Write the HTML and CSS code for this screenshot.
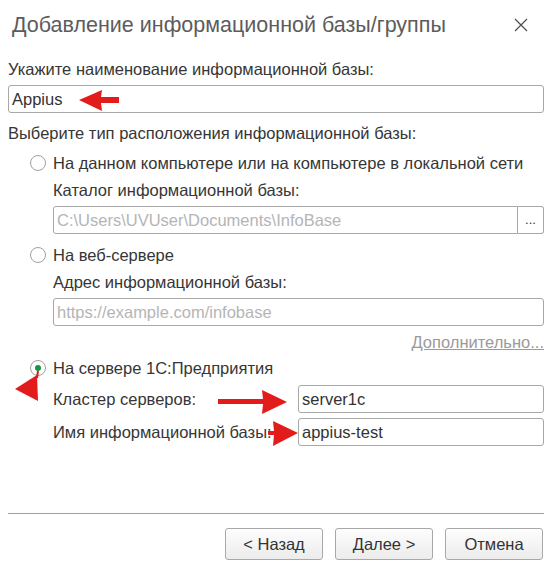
FILE: index.html
```html
<!DOCTYPE html>
<html lang="ru">
<head>
    <meta charset="UTF-8">
    <title>Добавление информационной базы/группы</title>
    <link rel="stylesheet" href="styles.css">
</head>
<body>
    <div class="dialog">
        <!-- Title -->
        <div class="title-bar">
            <h1>Добавление информационной базы/группы</h1>
            <svg class="close" width="16" height="16" viewBox="0 0 16 16">
                <path d="M2 2 L14 14 M14 2 L2 14" stroke="#505050" stroke-width="1.3" fill="none"/>
            </svg>
        </div>

        <div class="label first">Укажите наименование информационной базы:</div>
        <div class="field">Appius</div>

        <div class="label section">Выберите тип расположения информационной базы:</div>

        <div class="option">
            <div class="radio-row">
                <span class="radio"></span>
                <span>На данном компьютере или на компьютере в локальной сети</span>
            </div>
            <div class="sub">
                <div class="label sub-label">Каталог информационной базы:</div>
                <div class="field-group">
                    <div class="field placeholder">C:\Users\UVUser\Documents\InfoBase</div>
                    <div class="pick">...</div>
                </div>
            </div>
        </div>

        <div class="option">
            <div class="radio-row">
                <span class="radio"></span>
                <span>На веб-сервере</span>
            </div>
            <div class="sub">
                <div class="label sub-label">Адрес информационной базы:</div>
                <div class="field placeholder">https://example.com/infobase</div>
                <div class="more"><a href="#">Дополнительно...</a></div>
            </div>
        </div>

        <div class="option last">
            <div class="radio-row">
                <span class="radio checked"></span>
                <span>На сервере 1С:Предприятия</span>
            </div>
            <div class="sub">
                <div class="pair">
                    <div class="pair-label">Кластер серверов:</div>
                    <div class="field">server1c</div>
                </div>
                <div class="pair second">
                    <div class="pair-label">Имя информационной базы:</div>
                    <div class="field">appius-test</div>
                </div>
            </div>
        </div>

        <div class="separator"></div>

        <div class="buttons">
            <button>&lt; Назад</button>
            <button>Далее &gt;</button>
            <button>Отмена</button>
        </div>
    </div>

    <!-- Red annotation arrows -->
    <svg class="marks" width="552" height="571" viewBox="0 0 552 571">
        <g fill="#e21b1b">
            <polygon points="79,100 102,90 101,97 119,97 119,103 101,103 102,111"/>
            <polygon points="218,399 263,399 262,390 287,402 262,414 263,404 218,404"/>
            <polygon points="268,431 274,431 273,421 298,433 273,446 274,435 268,435"/>
            <polygon points="15,389 37,375 38,401"/>
        </g>
        <line x1="37" y1="378" x2="38" y2="371" stroke="#e21b1b" stroke-width="2"/>
    </svg>
</body>
</html>
```

FILE: styles.css
```css
* {
    margin: 0;
    padding: 0;
    box-sizing: border-box;
}

body {
    font-family: 'Liberation Sans', Arial, sans-serif;
    font-size: 16.5px;
    color: #363636;
    background: #fff;
}

.dialog {
    width: 552px;
    height: 571px;
    padding: 0 8px;
}

.title-bar {
    height: 50px;
    display: flex;
    align-items: center;
    justify-content: space-between;
    padding: 0 15px 0 4px;
}

.title-bar h1 {
    font-weight: normal;
    font-size: 21.5px;
    color: #5c5c5c;
}

.label {
    line-height: 18px;
}

.label.first {
    margin-top: 10px;
}

.label.section {
    margin-top: 11px;
}

.field {
    height: 28px;
    line-height: 26px;
    border: 1px solid #a8a8a8;
    border-radius: 3px;
    padding: 0 3px;
    color: #333;
    background: #fff;
}

.label + .field {
    margin-top: 7px;
}

.placeholder {
    color: #b5b5b5;
}

.option {
    padding-left: 22px;
    margin-top: 12px;
}

.option:first-of-type {
    margin-top: 11px;
}

.radio-row {
    display: flex;
    align-items: center;
    gap: 7px;
    height: 18px;
}

.radio {
    width: 16px;
    height: 16px;
    border: 1px solid #a0a0a0;
    border-radius: 50%;
    background: #fff;
    display: flex;
    align-items: center;
    justify-content: center;
}

.radio.checked::after {
    content: '';
    width: 6px;
    height: 6px;
    border-radius: 50%;
    background: #159447;
}

.sub {
    padding-left: 23px;
}

.sub-label {
    margin-top: 9px;
}

.option:nth-of-type(2) .sub-label {
    margin-top: 10px;
}

.field-group {
    display: flex;
    margin-top: 7px;
}

.field-group .field {
    flex: 1;
    border-radius: 3px 0 0 3px;
}

.pick {
    width: 26px;
    height: 28px;
    border: 1px solid #a8a8a8;
    border-left: none;
    border-radius: 0 3px 3px 0;
    text-align: center;
    line-height: 26px;
    font-size: 13px;
    color: #333;
}

.more {
    text-align: right;
    margin-top: 7px;
    line-height: 18px;
}

.more a {
    color: #9a9a9a;
}

.option.last {
    margin-top: 8px;
}

.pair {
    display: flex;
    align-items: center;
    margin-top: 8px;
}

.pair.second {
    margin-top: 5px;
}

.pair-label {
    width: 245px;
}

.pair .field {
    flex: 1;
}

.separator {
    height: 1px;
    background: #a0a0a0;
    margin-top: 67px;
}

.buttons {
    display: flex;
    justify-content: flex-end;
    gap: 12px;
    margin-top: 14px;
    padding-right: 1px;
}

.buttons button {
    width: 98px;
    height: 32px;
    font-family: inherit;
    font-size: 16.5px;
    color: #333;
    background: linear-gradient(#fdfdfd, #ececec);
    border: 1px solid #a8a8a8;
    border-radius: 3px;
}

.marks {
    position: absolute;
    top: 0;
    left: 0;
    pointer-events: none;
}
```
